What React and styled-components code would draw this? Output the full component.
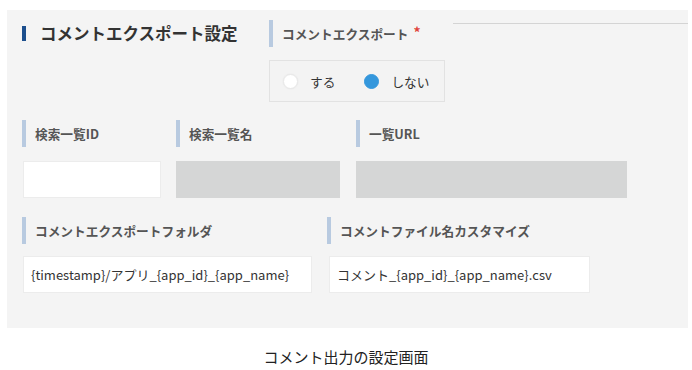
import React from "react";
import styled, { createGlobalStyle } from "styled-components";

const Global = createGlobalStyle`
  html, body { margin: 0; padding: 0; background: #ffffff; }
  body { font-family: "Noto Sans CJK JP", "Noto Sans", sans-serif; color: #333; }
  * { box-sizing: border-box; }
`;

const Panel = styled.div`
  margin: 10px 4px 0 7px;
  height: 318px;
  background: #f4f4f4;
  padding: 10px 0 0 15px;
`;

const TopRow = styled.div`
  display: flex;
  align-items: flex-start;
`;

const TitleBlock = styled.div`
  width: 247px;
  height: 27px;
  display: flex;
  align-items: center;
`;

const TitleBar = styled.span`
  width: 4px;
  height: 15px;
  background: #1c4f8d;
  margin-right: 14px;
`;

const TitleText = styled.h2`
  margin: 0;
  font-size: 16.5px;
  font-weight: 700;
  color: #333;
  line-height: 1;
`;

const RuleLine = styled.div`
  flex: 1;
  margin: 3px 0 0 8px;
  border-top: 1px solid #d4d4d4;
`;

const Row = styled.div`
  display: flex;
  gap: 15px;
  margin-top: ${(p) => p.$top}px;
`;

const Field = styled.div`
  width: ${(p) => p.$w}px;
  display: flex;
  flex-direction: column;
`;

const Label = styled.div`
  height: 27px;
  display: flex;
  align-items: center;
  border-left: 4px solid #b8cae0;
  padding-left: 9px;
  font-size: 12.7px;
  font-weight: 700;
  color: #555;
  white-space: nowrap;
`;

const Required = styled.span`
  color: #e0433a;
  margin-left: 5px;
  font-size: 14px;
  font-weight: 700;
  position: relative;
  top: -2px;
`;

const Input = styled.div`
  margin-top: ${(p) => p.$gap}px;
  height: 37px;
  width: ${(p) => p.$w}px;
  margin-left: ${(p) => p.$off || 0}px;
  background: ${(p) => (p.$disabled ? "#d5d6d6" : "#ffffff")};
  border: 1px solid ${(p) => (p.$disabled ? "#d5d6d6" : "#ececec")};
  display: flex;
  align-items: center;
  padding-left: 7px;
  font-size: 13px;
  color: #333;
  white-space: nowrap;
`;

const RadioGroup = styled.div`
  margin-top: 13px;
  width: 176px;
  height: 42px;
  border: 1px solid #e2e2e2;
  background: #f3f3f3;
  display: flex;
  align-items: center;
  padding-left: 13px;
  gap: 29px;
`;

const RadioItem = styled.label`
  display: flex;
  align-items: center;
  gap: 12px;
  font-size: 12.7px;
  color: #333;
`;

const Dot = styled.span`
  width: 15px;
  height: 15px;
  border-radius: 50%;
  background: ${(p) => (p.$on ? "#3497dc" : "#ffffff")};
  border: 1px solid ${(p) => (p.$on ? "#3497dc" : "#e8e8e8")};
  box-shadow: ${(p) => (p.$on ? "none" : "0 0 2px rgba(0,0,0,0.06)")};
`;

const Caption = styled.p`
  margin: 18px 0 0;
  text-align: center;
  font-size: 15px;
  line-height: 22px;
  color: #222;
`;

export default function App() {
  return (
    <>
      <Global />
      <Panel>
        <TopRow>
          <TitleBlock>
            <TitleBar />
            <TitleText>コメントエクスポート設定</TitleText>
          </TitleBlock>
          <Field $w={176}>
            <Label>
              コメントエクスポート<Required>*</Required>
            </Label>
            <RadioGroup>
              <RadioItem>
                <Dot />
                する
              </RadioItem>
              <RadioItem>
                <Dot $on />
                しない
              </RadioItem>
            </RadioGroup>
          </Field>
          <RuleLine />
        </TopRow>

        <Row $top={18}>
          <Field $w={139}>
            <Label>検索一覧ID</Label>
            <Input $gap={14} $w={138} $off={1} />
          </Field>
          <Field $w={165}>
            <Label>検索一覧名</Label>
            <Input $gap={14} $w={164} $disabled />
          </Field>
          <Field $w={272}>
            <Label>一覧URL</Label>
            <Input $gap={14} $w={271} $disabled />
          </Field>
        </Row>

        <Row $top={19}>
          <Field $w={290}>
            <Label>コメントエクスポートフォルダ</Label>
            <Input $gap={12} $w={289} $off={1}>
              {"{timestamp}/アプリ_{app_id}_{app_name}"}
            </Input>
          </Field>
          <Field $w={263}>
            <Label>コメントファイル名カスタマイズ</Label>
            <Input $gap={12} $w={261} $off={2}>
              {"コメント_{app_id}_{app_name}.csv"}
            </Input>
          </Field>
        </Row>
      </Panel>
      <Caption>コメント出力の設定画面</Caption>
    </>
  );
}
